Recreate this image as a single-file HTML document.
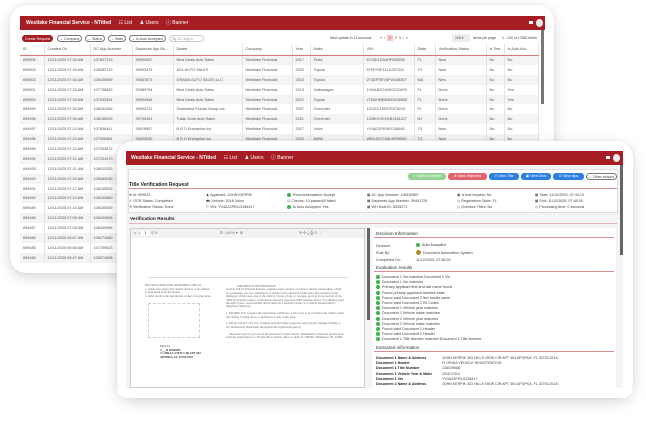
<!DOCTYPE html>
<html><head><meta charset="utf-8"><style>
*{margin:0;padding:0;box-sizing:border-box}
body{width:646px;height:444px;overflow:hidden;background:#fff;font-family:"Liberation Sans",sans-serif;position:relative;color:#444}
.a{position:absolute}
.card{position:absolute;background:#fff;border-radius:16px;box-shadow:0 4px 14px rgba(0,0,0,.16),0 0 3px rgba(0,0,0,.06)}
.hdr{position:absolute;background:#a61d24;color:#fff;font-weight:bold;white-space:nowrap}
.hdr span{font-weight:normal;margin-left:6px}
table{border-collapse:collapse;table-layout:fixed;font-size:3.8px;color:#555}
td,th{height:9.9px;padding:0 3px;white-space:nowrap;overflow:hidden;text-align:left;font-weight:normal;border-right:0.5px solid #e4e4e4}
th{height:11px;border-bottom:1px solid #d9777b;color:#555}
tr:nth-child(even) td{background:#f4f4f4}
.pill{position:absolute;height:7px;border:0.6px solid #777;border-radius:4px;font-size:3.6px;line-height:6px;padding:0 2px;color:#444;white-space:nowrap}
.btn{position:absolute;top:173px;height:7px;border-radius:3px;font-size:3.6px;line-height:7px;color:#fff;text-align:center}
.t{position:absolute;font-size:3.7px;color:#444;white-space:nowrap}
.b{font-weight:bold;color:#222}
.g{display:inline-block;width:4px;height:4px;border-radius:50%;background:#3bb54a;vertical-align:-1px;margin-right:2px}
.ln{position:absolute;height:1px;background:#d98f93}
.pdf{position:absolute;font-family:"Liberation Serif",serif;font-size:3px;color:#666;white-space:nowrap;line-height:3.6px}
</style></head><body>

<!-- back window -->
<div class="card" style="left:10px;top:5px;width:544px;height:268px"></div>
<div class="a" style="left:20px;top:16px;width:525px;height:250px;background:#fff;overflow:hidden">
 <div class="hdr" style="left:0;top:0;width:525px;height:14px;font-size:5px;line-height:14px;padding-left:6px">Westlake Financial Service - NTitled <span>☷ List</span> <span>♟ Users</span> <span>ⓘ Banner</span>
  <div class="a" style="right:12px;top:5px;width:4px;height:3px;background:#fff"></div>
  <div class="a" style="right:2px;top:3px;width:7px;height:8px;border-radius:50%;background:#eee"></div></div>
 <div class="pill" style="left:2px;top:19px;background:#a61d24;color:#fff;border-color:#a61d24">Create Request</div>
 <div class="pill" style="left:37px;top:19px">⌄ Company</div>
 <div class="pill" style="left:65px;top:19px">⌄ Status</div>
 <div class="pill" style="left:88px;top:19px">⌄ State</div>
 <div class="pill" style="left:109px;top:19px">⌄ Is Auto Accepted</div>
 <div class="pill" style="left:149px;top:19px;width:35px;border-color:#ccc;color:#999">🔍 DC App #</div>
 <div class="t" style="left:310px;top:20px;font-size:3.5px">Next update in 13 seconds</div>
 <div class="t" style="left:360px;top:20px;font-size:3.5px">«&nbsp; ‹ &nbsp;<span style="background:#f2c9cb;padding:1px 2px;color:#a61d24">1</span>&nbsp; <span style="color:#a61d24">2 &nbsp;3</span> &nbsp;› &nbsp;»</div>
 <div class="a" style="left:378px;top:18px;width:0"></div>
 <div class="a" style="left:378px;top:19px;width:0"></div>
 <div class="a" style="left:432px;top:18px;width:18px;height:8px;background:#eee;font-size:3.5px;line-height:8px;padding-left:3px">100 ▾</div>
 <div class="t" style="left:453px;top:20px;font-size:3.5px">items per page</div>
 <div class="t" style="left:482px;top:20px;font-size:3.5px">1 - 100 of 17662 items</div>
 <div class="a" style="left:521px;top:14px;width:3px;height:74px;background:#777"></div>
 <table class="a" style="left:0;top:28px;width:518px">
 <colgroup><col style="width:24px"><col style="width:46px"><col style="width:42px"><col style="width:41px"><col style="width:69px"><col style="width:50px"><col style="width:18px"><col style="width:53px"><col style="width:51px"><col style="width:21px"><col style="width:51px"><col style="width:18px"><col style="width:34px"></colgroup>
 <tr><th>ID</th><th>Created On</th><th>DC App Number</th><th>Daybreak App Nu...</th><th>Dealer</th><th>Company</th><th>Year</th><th>Make</th><th>VIN</th><th>State</th><th>Verification Status</th><th>Is Test</th><th>Is Auto Acc...</th></tr>
 <tr><td>699504</td><td>12/11/2025 07:34 AM</td><td>107847215</td><td>39090657</td><td>Best Deals Auto Sales</td><td>Westlake Financial</td><td>2017</td><td>Tesla</td><td>5YJ3E1EA4HF045555</td><td>FL</td><td>New</td><td>No</td><td>No</td></tr>
 <tr><td>699503</td><td>12/11/2025 07:34 AM</td><td>108282719</td><td>39093479</td><td>ADL AUTO SALES</td><td>Westlake Financial</td><td>2020</td><td>Toyota</td><td>5TFEY5F11LX257322</td><td>TX</td><td>New</td><td>No</td><td>No</td></tr>
 <tr><td>699502</td><td>12/11/2025 07:34 AM</td><td>108426589</td><td>39087673</td><td>GRAND AUTO SALES LLC</td><td>Westlake Financial</td><td>2015</td><td>Toyota</td><td>2T3DFREV6FW208307</td><td>MA</td><td>New</td><td>No</td><td>No</td></tr>
 <tr><td>699501</td><td>12/11/2025 07:33 AM</td><td>107736833</td><td>39089754</td><td>Best Deals Auto Sales</td><td>Westlake Financial</td><td>2019</td><td>Volkswagen</td><td>1VWLB2CA0KC010876</td><td>FL</td><td>Done</td><td>No</td><td>Yes</td></tr>
 <tr><td>699500</td><td>12/11/2025 07:33 AM</td><td>107533304</td><td>39094948</td><td>Best Deals Auto Sales</td><td>Westlake Financial</td><td>2021</td><td>Toyota</td><td>JTNDHMBE6M0105555</td><td>FL</td><td>Done</td><td>No</td><td>Yes</td></tr>
 <tr><td>699499</td><td>12/11/2025 07:33 AM</td><td>108241056</td><td>39094731</td><td>Southwest Florida Group Inc</td><td>Westlake Financial</td><td>2007</td><td>Chevrolet</td><td>1GCEC19097E575210</td><td>FL</td><td>Done</td><td>No</td><td>No</td></tr>
 <tr><td>699498</td><td>12/11/2025 07:30 AM</td><td>108135025</td><td>39799451</td><td>Trade Zone Auto Sales</td><td>Westlake Financial</td><td>2011</td><td>Chevrolet</td><td>1GNKVGED0BJ334227</td><td>NJ</td><td>Done</td><td>No</td><td>No</td></tr>
 <tr><td>699497</td><td>12/11/2025 07:24 AM</td><td>107836441</td><td>39016957</td><td>B R O Enterprise Inc</td><td>Westlake Financial</td><td>2017</td><td>Volvo</td><td>YV4A22PK5H1118645</td><td>TX</td><td>New</td><td>No</td><td>No</td></tr>
 <tr><td>699496</td><td>12/11/2025 07:23 AM</td><td>107926584</td><td>39429230</td><td>B R O Enterprise Inc</td><td>Westlake Financial</td><td>2020</td><td>BMW</td><td>WBXJG7C08L5R99550</td><td>TX</td><td>New</td><td>No</td><td>No</td></tr>
 <tr><td>699495</td><td>12/11/2025 07:23 AM</td><td>107903672</td><td></td><td></td><td></td><td></td><td></td><td></td><td></td><td></td><td></td><td></td></tr>
 <tr><td>699494</td><td>12/11/2025 07:21 AM</td><td>107201970</td><td></td><td></td><td></td><td></td><td></td><td></td><td></td><td></td><td></td><td></td></tr>
 <tr><td>699493</td><td>12/11/2025 07:21 AM</td><td>108012029</td><td></td><td></td><td></td><td></td><td></td><td></td><td></td><td></td><td></td><td></td></tr>
 <tr><td>699492</td><td>12/11/2025 07:20 AM</td><td>108483045</td><td></td><td></td><td></td><td></td><td></td><td></td><td></td><td></td><td></td><td></td></tr>
 <tr><td>699491</td><td>12/11/2025 07:17 AM</td><td>108135525</td><td></td><td></td><td></td><td></td><td></td><td></td><td></td><td></td><td></td><td></td></tr>
 <tr><td>699490</td><td>12/11/2025 07:10 AM</td><td>108430560</td><td></td><td></td><td></td><td></td><td></td><td></td><td></td><td></td><td></td><td></td></tr>
 <tr><td>699489</td><td>12/11/2025 07:10 AM</td><td>108335309</td><td></td><td></td><td></td><td></td><td></td><td></td><td></td><td></td><td></td><td></td></tr>
 <tr><td>699488</td><td>12/11/2025 07:05 AM</td><td>108424906</td><td></td><td></td><td></td><td></td><td></td><td></td><td></td><td></td><td></td><td></td></tr>
 <tr><td>699487</td><td>12/11/2025 07:05 AM</td><td>108449956</td><td></td><td></td><td></td><td></td><td></td><td></td><td></td><td></td><td></td><td></td></tr>
 <tr><td>699486</td><td>12/11/2025 06:57 AM</td><td>108274080</td><td></td><td></td><td></td><td></td><td></td><td></td><td></td><td></td><td></td><td></td></tr>
 <tr><td>699485</td><td>12/11/2025 06:55 AM</td><td>107709523</td><td></td><td></td><td></td><td></td><td></td><td></td><td></td><td></td><td></td><td></td></tr>
 <tr><td>699484</td><td>12/11/2025 06:47 AM</td><td>108374058</td><td></td><td></td><td></td><td></td><td></td><td></td><td></td><td></td><td></td><td></td></tr>
 </table>
</div>

<!-- front window -->
<div class="card" style="left:117px;top:141px;width:516px;height:257px"></div>
<div class="a" style="left:126px;top:151px;width:497px;height:237px;background:#f4f4f4;overflow:hidden">
 <div class="hdr" style="left:0;top:0;width:497px;height:14px;font-size:5px;line-height:14px;padding-left:5px">Westlake Financial Service - NTitled <span>☷ List</span> <span>♟ Users</span> <span>ⓘ Banner</span>
  <div class="a" style="right:13px;top:5px;width:4px;height:3px;background:#fff"></div>
  <div class="a" style="right:3px;top:3px;width:7px;height:8px;border-radius:50%;background:#eee"></div></div>
 <div class="a" style="left:494px;top:14px;width:3px;height:90px;background:#666"></div>
 <div class="a" style="left:2px;top:18px;width:490px;height:44px;background:#fff;border:0.5px solid #ddd"></div>
 <div class="ln" style="left:3px;top:37px;width:488px"></div>
 <div class="ln" style="left:3px;top:72px;width:488px;background:#e2b2b4"></div>
</div>
<div class="btn" style="left:408px;width:38px;background:#93d394">✓ Mark Accepted</div>
<div class="btn" style="left:448px;width:39px;background:#e0636b">⊗ Mark Rejected</div>
<div class="btn" style="left:489px;width:30px;background:#2b7fe0">⎙ View Title</div>
<div class="btn" style="left:521px;width:30px;background:#2b7fe0">▣ View Deal</div>
<div class="btn" style="left:553px;width:31px;background:#2b7fe0">☑ View dips</div>
<div class="btn" style="left:586px;width:31px;background:#fff;color:#444;border:0.6px solid #777;border-radius:4px">⌄ Other actions</div>
<div class="t b" style="left:129px;top:182px;font-size:5px">Title Verification Request</div>
<div class="t" style="left:129px;top:193px">⊕ Id: 699515</div>
<div class="t" style="left:129px;top:199px">✐ OCR Status: Completed</div>
<div class="t" style="left:129px;top:205px">⟲ Verification Status: Done</div>
<div class="t" style="left:206px;top:193px">♟ Applicant: JOHN KERPIK</div>
<div class="t" style="left:206px;top:199px">⛟ Vehicle: 2018 Volvo</div>
<div class="t" style="left:206px;top:205px">⎋ VIN: YV4A22PK5J1156417</div>
<div class="t" style="left:287px;top:193px"><i class="g"></i>Recommendation: Accept</div>
<div class="t" style="left:287px;top:199px">☑ Checks: 13 passed/0 failed.</div>
<div class="t" style="left:287px;top:205px"><i class="g"></i>Is Auto Accepted: Yes</div>
<div class="t" style="left:367px;top:193px">▦ DC App Number: 108150697</div>
<div class="t" style="left:367px;top:199px">▦ Daybreak App Number: 39491726</div>
<div class="t" style="left:367px;top:205px">▦ WH Deal ID: 8535071</div>
<div class="t" style="left:457px;top:193px">▣ Is test request: No</div>
<div class="t" style="left:457px;top:199px">◷ Registration State: FL</div>
<div class="t" style="left:457px;top:205px">◷ Oversize Titles: No</div>
<div class="t" style="left:535px;top:193px">▦ Start: 11/12/2025, 07:44:13</div>
<div class="t" style="left:535px;top:199px">▦ End: 11/12/2025, 07:48:39</div>
<div class="t" style="left:535px;top:205px">◷ Processing time: 0 seconds</div>
<div class="t b" style="left:130px;top:217px;font-size:4.8px">Verification Results</div>

<!-- pdf panel -->
<div class="a" style="left:130px;top:228px;width:235px;height:160px;background:#fff;border:0.6px solid #ccc"></div>
<div class="a" style="left:131px;top:229px;width:233px;height:9px;background:#f2f2f2;font-size:3.8px;line-height:9px;color:#777;padding-left:3px;white-space:nowrap">⌕ &nbsp;∧ <span style="background:#fff;padding:0 3px;color:#333">1</span> /2 ∨<span style="margin-left:62px">⊟ &nbsp;140% ▾ &nbsp;⊕</span><span style="margin-left:56px">⊚ ✣ ⤓ ⎙ ⊙ ⋮</span></div>
<div class="a" style="left:148px;top:277px;width:200px;height:0.5px;background:#ddd"></div>
<div class="pdf" style="left:145px;top:284px">INSTRUCTIONS FOR ATTACHING DECAL<br>1. Clean area where new annual decal is to be affixed.<br>2. Peel decal from the backer.<br>3. Affix decal to the appropriate corner of license plate</div>
<div class="a" style="left:148px;top:303px;width:52px;height:35px;border:0.5px dashed #ccc"></div>
<div class="pdf" style="left:160px;top:345px;color:#333">Mail To:<br><b>J___D KERPIK</b><br><b>3 1 HILLS VIEW CIR APT 304</b><br><b>APOPKA, FL 32703-0118</b></div>
<div class="pdf" style="left:226px;top:285px;width:118px;white-space:normal;line-height:3.4px">&nbsp;&nbsp;&nbsp;&nbsp;&nbsp;&nbsp;&nbsp;&nbsp;&nbsp;&nbsp;&nbsp;&nbsp;&nbsp;&nbsp;&nbsp;IMPORTANT INFORMATION<br>Section 316.613 Florida Statutes, requires every operator of a motor vehicle transporting a child in a passenger car, van, ambulance or pickup truck registered in this state and operated on the highways of this state, and, if the child is 5 years of age or younger, provide for protection of the child by properly using a crash-tested, federally approved child restraint device. For children aged through 3 years, such restraint device must be a separate carrier or a vehicle manufacturer's integrated child seat.<br><br>s. 320.0605, F.S., requires the registration certificate or true copy to be carried in the vehicle when the vehicle is being used or operated on roads of this state.<br><br>s. 320.02 and 627.733, F.S., requires personal injury protection and property damage liability to be continuously maintained throughout the registration period.<br><br>&nbsp;&nbsp;&nbsp;&nbsp;Important note: If you cancel the insurance for this vehicle, immediately return the license plate from the registration to a Florida driver license office or mail it to HSMV, Tallahassee, FL 32399.</div>

<!-- right panel -->
<div class="a" style="left:367px;top:228px;width:3px;height:92px;background:#666"></div>
<div class="a" style="left:372px;top:228px;width:244px;height:160px;background:#fff"></div>
<div class="t" style="left:376px;top:231px;font-size:4.6px;color:#333">Decision Information</div>
<div class="ln" style="left:374px;top:237px;width:240px"></div>
<div class="t" style="left:376px;top:244px">Decision:</div>
<div class="t" style="left:416px;top:243px;color:#333"><i class="g"></i>Auto Accepted</div>
<div class="t" style="left:376px;top:251px">Rule By:</div>
<div class="t" style="left:416px;top:250px"><i class="g" style="background:#b58a2a;width:5px;height:5px"></i>Document Automation System</div>
<div class="t" style="left:376px;top:258px">Completed On:</div>
<div class="t" style="left:416px;top:258px">11/12/2025, 07:48:39</div>
<div class="t" style="left:376px;top:265px;font-size:4.6px;color:#333">Evaluation results</div>
<div class="ln" style="left:374px;top:271px;width:240px"></div>
<div class="t" style="left:376px;top:275px;line-height:5.2px">
<i class="g"></i>Document 1 Vin matches Document 2 Vin<br>
<i class="g"></i>Document 1 Vin matches<br>
<i class="g"></i>Primary applicant first and last name found<br>
<i class="g"></i>Found primary applicant address state<br>
<i class="g"></i>Found valid Document 2 lien holder name<br>
<i class="g"></i>Found valid Document 2 Eli Codes<br>
<i class="g"></i>Document 1 Vehicle year matches<br>
<i class="g"></i>Document 1 Vehicle make matches<br>
<i class="g"></i>Document 2 Vehicle year matches<br>
<i class="g"></i>Document 2 Vehicle make matches<br>
<i class="g"></i>Found valid Document 1 Header<br>
<i class="g"></i>Found valid Document 2 Header<br>
<i class="g"></i>Document 1 Title Number matches Document 2 Title Number</div>
<div class="t" style="left:376px;top:345px;font-size:4.6px;color:#333">Extracted information</div>
<div class="ln" style="left:374px;top:351px;width:240px"></div>
<div class="t b" style="left:376px;top:356px;line-height:5.2px;font-size:3.6px">Document 1 Name &amp; Address<br>Document 1 Header<br>Document 1 Title Number<br>Document 1 Vehicle Year &amp; Make<br>Document 1 Vin<br>Document 2 Name &amp; Address</div>
<div class="t" style="left:442px;top:356px;line-height:5.2px;font-size:3.6px">JOHN KERPIK 303 HILLS VIEW CIR APT 304 APOPKA, FL 32703-0118<br>FLORIDA VEHICLE REGISTRATION<br>128029688<br>2018 VOLV<br>YV4A22PK5J1156417<br>JOHN KERPIK 303 HILLS VIEW CIR APT 304 APOPKA, FL 32703-0118</div>
<div class="a" style="left:117px;top:388px;width:516px;height:10px;background:#fff;border-radius:0 0 16px 16px"></div>
</body></html>
